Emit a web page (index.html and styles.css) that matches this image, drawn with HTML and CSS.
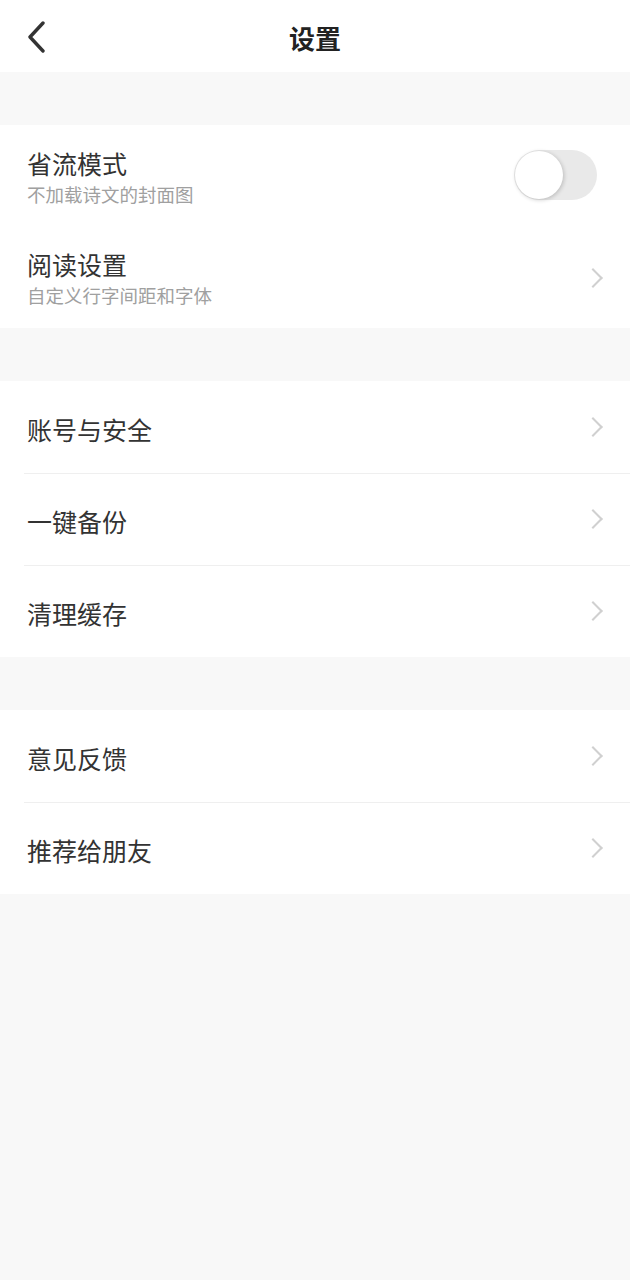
FILE: index.html
```html
<!DOCTYPE html>
<html lang="zh-CN">
<head>
    <meta charset="UTF-8">
    <meta name="viewport" content="width=device-width, initial-scale=1.0">
    <title>设置</title>
    <link rel="stylesheet" href="styles.css">
</head>
<body>
    <header class="top-bar">
        <button class="back-btn" aria-label="返回">
            <svg width="20" height="32" viewBox="0 0 20 32"><path d="M17 2 L4 16 L17 30" fill="none" stroke="#333" stroke-width="3.4" stroke-linecap="round" stroke-linejoin="round"/></svg>
        </button>
        <h1 class="title">设置</h1>
    </header>

    <section class="group">
        <div class="row tall">
            <div class="row-text">
                <div class="row-title">省流模式</div>
                <div class="row-sub">不加载诗文的封面图</div>
            </div>
            <div class="switch"><span class="knob"></span></div>
        </div>
        <div class="row tall">
            <div class="row-text">
                <div class="row-title">阅读设置</div>
                <div class="row-sub">自定义行字间距和字体</div>
            </div>
            <span class="arrow"></span>
        </div>
    </section>

    <section class="group">
        <div class="row">
            <div class="row-title">账号与安全</div>
            <span class="arrow"></span>
        </div>
        <div class="row">
            <div class="row-title">一键备份</div>
            <span class="arrow"></span>
        </div>
        <div class="row">
            <div class="row-title">清理缓存</div>
            <span class="arrow"></span>
        </div>
    </section>

    <section class="group">
        <div class="row">
            <div class="row-title">意见反馈</div>
            <span class="arrow"></span>
        </div>
        <div class="row">
            <div class="row-title">推荐给朋友</div>
            <span class="arrow"></span>
        </div>
    </section>
</body>
</html>
```

FILE: styles.css
```css
body {
    margin: 0;
    background: #f8f8f8;
    color: #333;
    font-family: "Noto Sans CJK SC", "Noto Sans", sans-serif;
    min-height: 1280px;
}
.top-bar {
    height: 72px;
    background: #fff;
    display: flex;
    align-items: center;
    justify-content: center;
    position: relative;
}
.back-btn {
    position: absolute;
    left: 24px;
    top: 21px;
    background: none;
    border: none;
    padding: 0;
    width: 24px;
    height: 32px;
}
.title {
    margin: 0;
    font-size: 26px;
    font-weight: bold;
    color: #222;
    line-height: 1;
    padding-top: 4px;
}
.group {
    background: #fff;
    margin-top: 53px;
}
.row {
    height: 92px;
    display: flex;
    align-items: center;
    justify-content: space-between;
    padding: 4px 24px 0 27px;
    box-sizing: border-box;
    position: relative;
}
.row + .row::before {
    content: "";
    position: absolute;
    top: 0;
    left: 24px;
    right: 0;
    border-top: 1px solid #efefef;
}
.row.tall {
    height: 101px;
    padding-top: 2px;
}
.row.tall + .row.tall {
    height: 102px;
}
.row.tall + .row.tall::before {
    display: none;
}
.row-title {
    font-size: 25px;
    line-height: 30px;
    color: #333;
}
.row-sub {
    font-size: 18.5px;
    line-height: 24px;
    color: #a0a0a0;
    margin-top: 4px;
}
.arrow {
    width: 12px;
    height: 12px;
    border-top: 2px solid #d0d0d0;
    border-right: 2px solid #d0d0d0;
    transform: rotate(45deg);
    margin: -4px 6px 0 0;
}
.row.tall .arrow {
    margin-top: 0;
}
.switch {
    width: 83px;
    height: 50px;
    border-radius: 25px;
    background: #e9e9e9;
    display: flex;
    align-items: center;
    padding-left: 1px;
    box-sizing: border-box;
    margin: -4px 9px 0 0;
}
.knob {
    width: 48px;
    height: 48px;
    border-radius: 50%;
    background: #fff;
    box-shadow: 1px 1px 4px rgba(0, 0, 0, 0.2);
}
```
